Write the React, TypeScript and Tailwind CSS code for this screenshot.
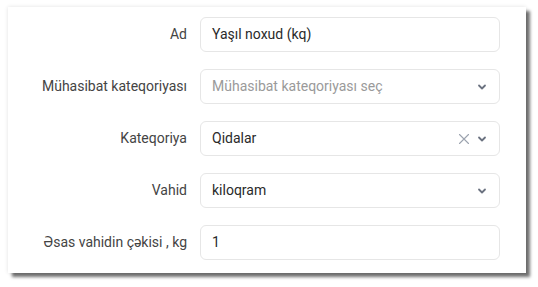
const FIELDS = [
  { label: 'Ad', value: 'Yaşıl noxud (kq)', kind: 'text' },
  { label: 'Mühasibat kateqoriyası', value: 'Mühasibat kateqoriyası seç', kind: 'placeholder' },
  { label: 'Kateqoriya', value: 'Qidalar', kind: 'clearable' },
  { label: 'Vahid', value: 'kiloqram', kind: 'select' },
  { label: 'Əsas vahidin çəkisi , kg', value: '1', kind: 'text' },
]

function Chevron() {
  return (
    <svg width="10" height="10" viewBox="0 0 10 10" className="text-[#6b7280]">
      <path d="M2 3.5 L5 6.5 L8 3.5" fill="none" stroke="currentColor" strokeWidth="1.8" strokeLinecap="round" strokeLinejoin="round" />
    </svg>
  )
}

function Cross() {
  return (
    <svg width="12" height="12" viewBox="0 0 12 12" className="text-[#9ca3af]">
      <path d="M1.5 1.5 L10.5 10.5 M10.5 1.5 L1.5 10.5" fill="none" stroke="currentColor" strokeWidth="1.1" strokeLinecap="round" />
    </svg>
  )
}

export default function App() {
  return (
    <div className="w-[538px] h-[287px] bg-white pt-[7px] pl-[8px] font-['Roboto',sans-serif]">
      <div className="w-[518px] h-[266px] bg-white shadow-[0_0_4px_rgba(0,0,0,0.12),4px_4px_3px_rgba(0,0,0,0.55)] pt-[10px] flex flex-col gap-[17px]">
        {FIELDS.map((f) => (
          <div key={f.label} className="flex items-center">
            <label className="w-[180px] pr-[1px] text-right text-[14px] text-[#444]">{f.label}</label>
            <div className="ml-[12px] w-[300px] h-[35px] rounded-[6px] border border-[#e6e6e6] flex items-center pl-[11px] pr-[12px]">
              <span
                className={
                  f.kind === 'placeholder'
                    ? 'flex-1 text-[14px] text-[#9a9a9a]'
                    : 'flex-1 text-[14px] text-[#2a2a2a]'
                }
              >
                {f.value}
              </span>
              {f.kind === 'clearable' && (
                <div className="flex items-center gap-[7px]">
                  <Cross />
                  <Chevron />
                </div>
              )}
              {(f.kind === 'select' || f.kind === 'placeholder') && <Chevron />}
            </div>
          </div>
        ))}
      </div>
    </div>
  )
}
